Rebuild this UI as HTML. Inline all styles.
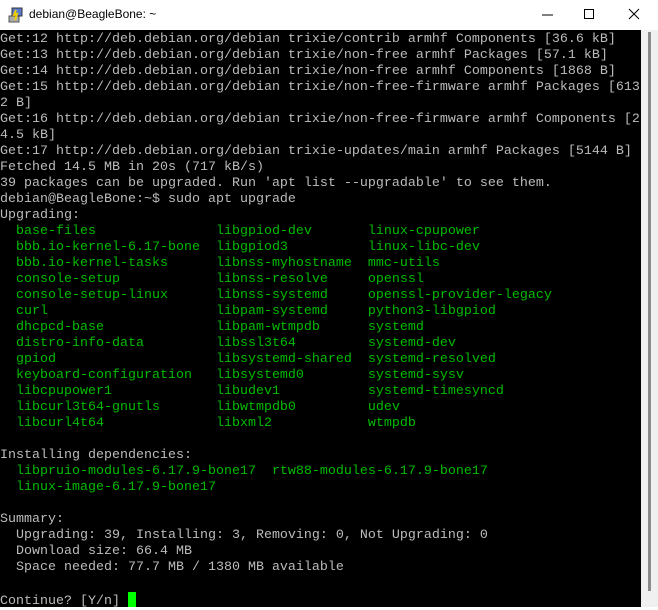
<!DOCTYPE html>
<html><head><meta charset="utf-8"><style>
html,body{margin:0;padding:0;width:658px;height:607px;overflow:hidden;background:#fff;}
.tb{position:absolute;left:0;top:0;width:658px;height:30px;background:#fff;}
.title{position:absolute;left:29px;top:7px;font:12px "Liberation Sans",sans-serif;color:#000;}
.term{position:absolute;left:0;top:30px;width:641px;height:577px;background:#000;}
.sb{position:absolute;left:641px;top:30px;width:17px;height:577px;background:#f0f0f0;}
.thumb{position:absolute;left:648px;top:32px;width:3px;height:559px;background:#8a8a8a;}
pre{position:absolute;left:0;top:32px;margin:0;font:13.33px/16px "Liberation Mono",monospace;color:#bbbbbb;}
.g{color:#00bb00;}
.cur{display:inline-block;width:8px;height:15px;background:#00ff00;vertical-align:-3px;}
</style></head><body>
<div class="tb">
<svg style="position:absolute;left:8px;top:7px" width="16" height="16" viewBox="0 0 16 16">
<rect x="1" y="9" width="10" height="6" fill="#aaa" stroke="#555" stroke-width="1"/>
<rect x="4" y="1" width="10" height="8" fill="#5a7ad0" stroke="#333" stroke-width="1"/>
<path d="M8 3 L6 8 L9 7 L7 13" stroke="#f0d000" stroke-width="2" fill="none"/>
</svg>
<div class="title">debian@BeagleBone: ~</div>
<svg style="position:absolute;left:542px;top:8px" width="110" height="14" viewBox="0 0 110 14">
<line x1="0" y1="7" x2="11" y2="7" stroke="#000" stroke-width="1"/>
<rect x="42.5" y="1.5" width="9" height="9" fill="none" stroke="#000" stroke-width="1"/>
<path d="M87 1 L97 11 M97 1 L87 11" stroke="#000" stroke-width="1"/>
</svg>
</div>
<div class="term"></div>
<div class="sb"></div><div class="thumb"></div>
<pre>Get:12 http://deb.debian.org/debian trixie/contrib armhf Components [36.6 kB]
Get:13 http://deb.debian.org/debian trixie/non-free armhf Packages [57.1 kB]
Get:14 http://deb.debian.org/debian trixie/non-free armhf Components [1868 B]
Get:15 http://deb.debian.org/debian trixie/non-free-firmware armhf Packages [613
2 B]
Get:16 http://deb.debian.org/debian trixie/non-free-firmware armhf Components [2
4.5 kB]
Get:17 http://deb.debian.org/debian trixie-updates/main armhf Packages [5144 B]
Fetched 14.5 MB in 20s (717 kB/s)
39 packages can be upgraded. Run 'apt list --upgradable' to see them.
debian@BeagleBone:~$ sudo apt upgrade
Upgrading:
<span class="g">  base-files               libgpiod-dev       linux-cpupower
  bbb.io-kernel-6.17-bone  libgpiod3          linux-libc-dev
  bbb.io-kernel-tasks      libnss-myhostname  mmc-utils
  console-setup            libnss-resolve     openssl
  console-setup-linux      libnss-systemd     openssl-provider-legacy
  curl                     libpam-systemd     python3-libgpiod
  dhcpcd-base              libpam-wtmpdb      systemd
  distro-info-data         libssl3t64         systemd-dev
  gpiod                    libsystemd-shared  systemd-resolved
  keyboard-configuration   libsystemd0        systemd-sysv
  libcpupower1             libudev1           systemd-timesyncd
  libcurl3t64-gnutls       libwtmpdb0         udev
  libcurl4t64              libxml2            wtmpdb</span>

Installing dependencies:
<span class="g">  libpruio-modules-6.17.9-bone17  rtw88-modules-6.17.9-bone17
  linux-image-6.17.9-bone17</span>

Summary:
  Upgrading: 39, Installing: 3, Removing: 0, Not Upgrading: 0
  Download size: 66.4 MB
  Space needed: 77.7 MB / 1380 MB available

Continue? [Y/n] <span class="cur"></span></pre>
</body></html>
